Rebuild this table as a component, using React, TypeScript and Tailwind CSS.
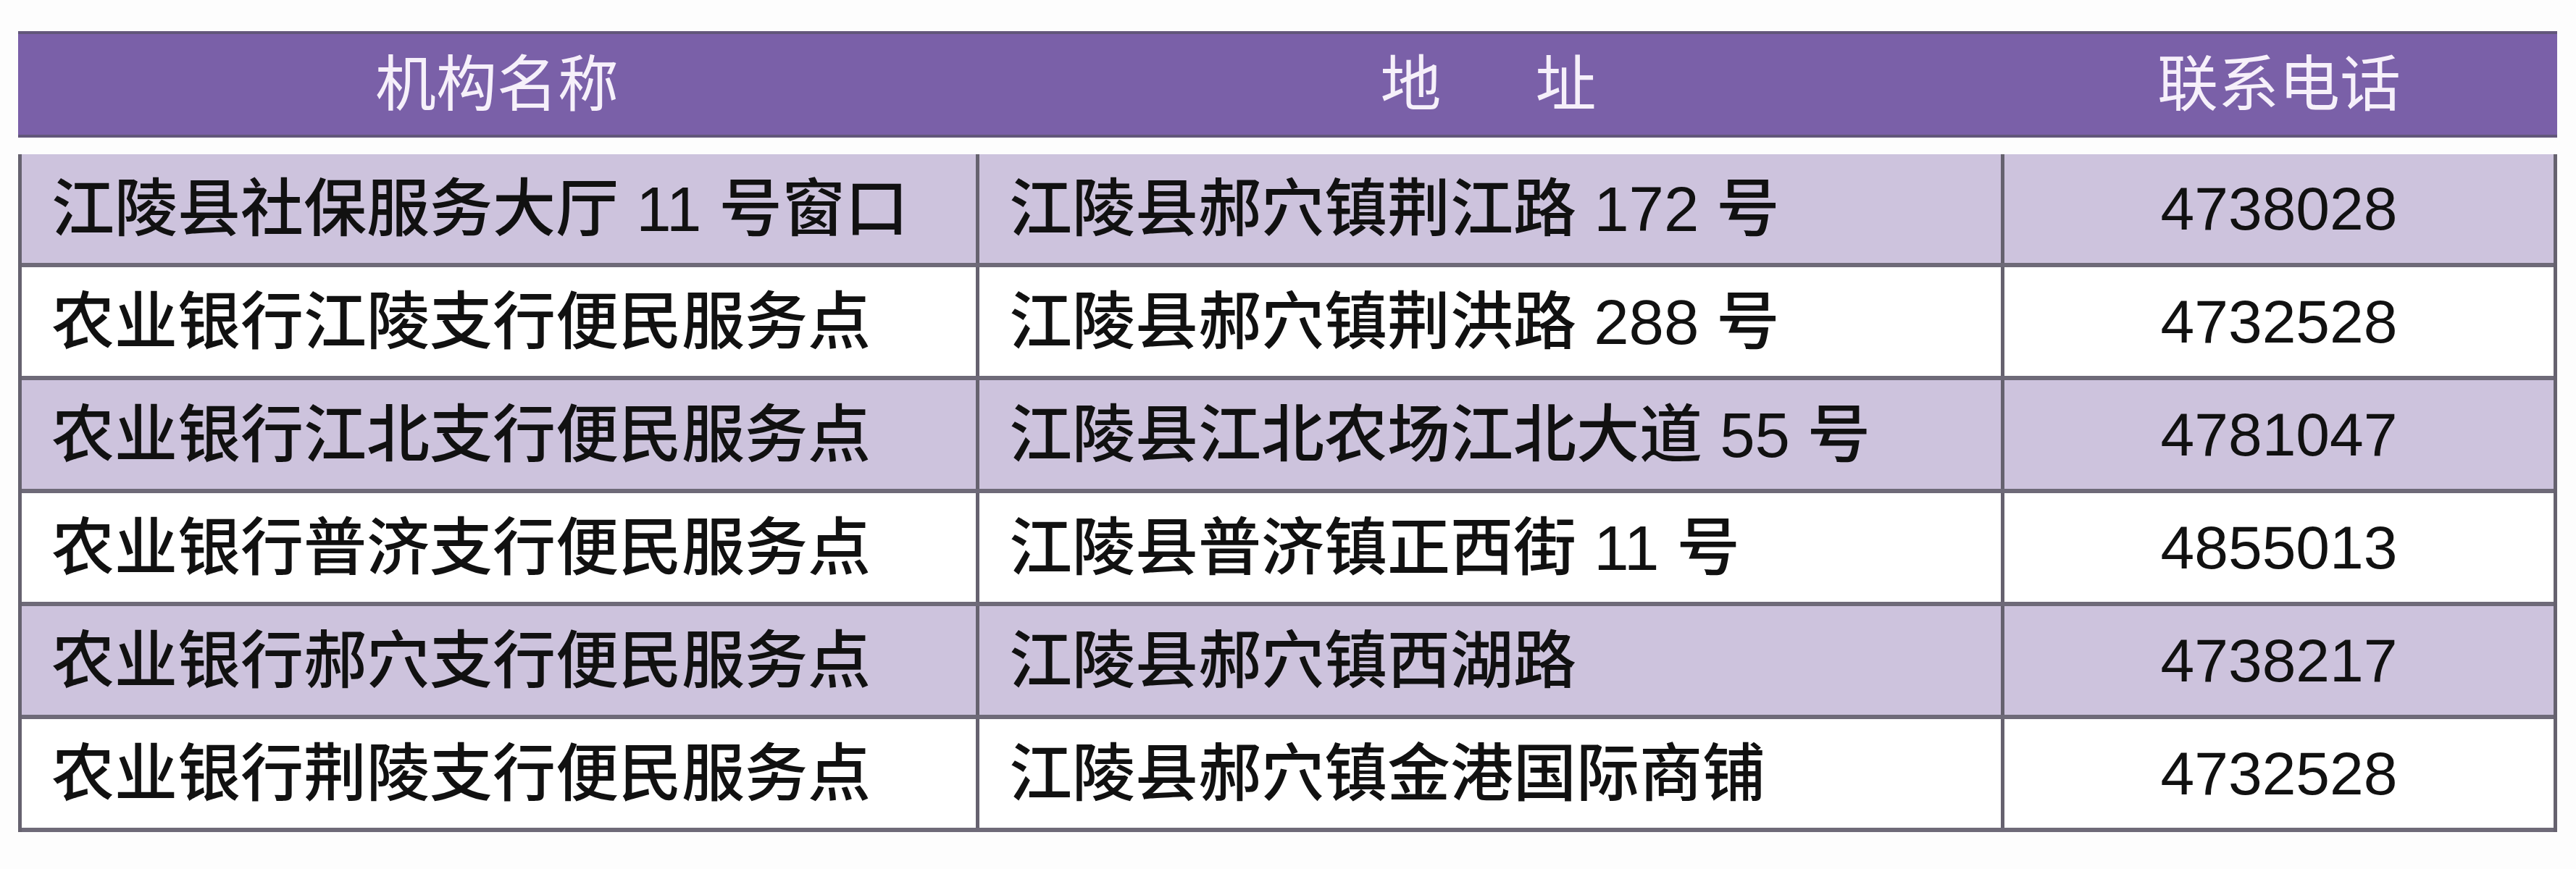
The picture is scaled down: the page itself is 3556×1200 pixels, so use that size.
const rows = [
  { name: "江陵县社保服务大厅 11 号窗口", addr: "江陵县郝穴镇荆江路 172 号", tel: "4738028" },
  { name: "农业银行江陵支行便民服务点", addr: "江陵县郝穴镇荆洪路 288 号", tel: "4732528" },
  { name: "农业银行江北支行便民服务点", addr: "江陵县江北农场江北大道 55 号", tel: "4781047" },
  { name: "农业银行普济支行便民服务点", addr: "江陵县普济镇正西街 11 号", tel: "4855013" },
  { name: "农业银行郝穴支行便民服务点", addr: "江陵县郝穴镇西湖路", tel: "4738217" },
  { name: "农业银行荆陵支行便民服务点", addr: "江陵县郝穴镇金港国际商铺", tel: "4732528" },
];

export default function App() {
  return (
    <div
      className="w-[3556px] h-[1200px] bg-[#fdfdfd] pt-[43px] pl-[25px]"
      style={{ fontFamily: '"Liberation Sans", "Noto Sans CJK SC", sans-serif' }}
    >
      <div className="w-[3505px]">
        {/* Header */}
        <div className="flex h-[147px] items-center bg-[#7a60a8] border-y-[4px] border-[#62577a] text-[84px] text-[#f6f0fa] leading-none">
          <div className="w-[1322px] flex justify-center">机构名称</div>
          <div className="w-[1415px] flex justify-center gap-[130px]">
            <span>地</span>
            <span>址</span>
          </div>
          <div className="flex-1 flex justify-center">联系电话</div>
        </div>

        <div className="h-[23px]" />

        {/* Body */}
        <div className="border-x-[5px] border-[#66626f]">
          {rows.map((r, i) => (
            <div
              key={i}
              className={`flex h-[156px] border-b-[6px] border-[#6e6a78] text-[87px] leading-none font-medium text-[#111] ${
                i % 2 === 0 ? "bg-[#cdc3dd]" : "bg-white"
              }`}
            >
              <div className="w-[1317px] flex items-center pl-[41px] whitespace-pre">{r.name}</div>
              <div className="w-[1415px] flex items-center pl-[41px] border-l-[5px] border-[#66626f] whitespace-pre">
                {r.addr}
              </div>
              <div className="flex-1 flex items-center justify-center border-l-[5px] border-[#66626f] text-[84px]">
                {r.tel}
              </div>
            </div>
          ))}
        </div>
      </div>
    </div>
  );
}
